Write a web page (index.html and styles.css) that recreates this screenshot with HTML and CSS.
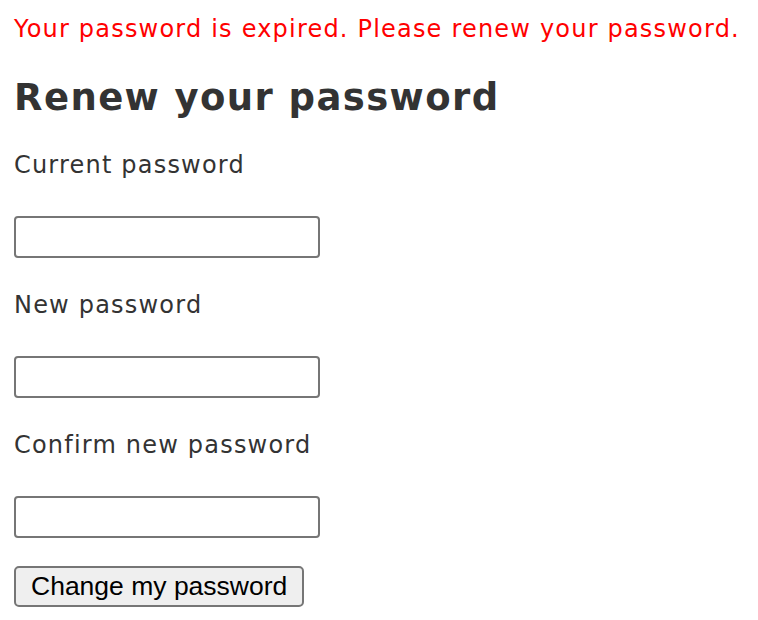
FILE: index.html
```html
<!DOCTYPE html>
<html lang="en">
<head>
  <meta charset="UTF-8">
  <title>Renew your password</title>
  <link rel="stylesheet" href="styles.css">
</head>
<body>

  <p class="error">Your password is expired. Please renew your password.</p>

  <h1>Renew your password</h1>

  <form class="renew-form">
    <label for="current">Current password</label>
    <input type="password" id="current">

    <label for="new">New password</label>
    <input type="password" id="new">

    <label for="confirm">Confirm new password</label>
    <input type="password" id="confirm">

    <button type="submit">Change my password</button>
  </form>

</body>
</html>
```

FILE: styles.css
```css
body {
  font-family: "DejaVu Sans", Verdana, sans-serif;
  font-size: 24px;
  letter-spacing: 1.2px;
  color: #333;
  margin: 0;
  padding: 15px 14px;
  background: #fff;
}
.error {
  color: #ff0000;
  margin: 0 0 33px 0;
}
h1 {
  font-size: 37px;
  letter-spacing: 1.4px;
  font-weight: bold;
  margin: 0 0 32px 0;
}
.renew-form {
  display: flex;
  flex-direction: column;
  align-items: flex-start;
}
label {
  margin-bottom: 37px;
}
input {
  width: 306px;
  height: 42px;
  box-sizing: border-box;
  border: 2px solid #767676;
  border-radius: 4px;
  margin: 0 0 33px 0;
}
button {
  font-family: "Liberation Sans", Arial, sans-serif;
  font-size: 26.5px;
  letter-spacing: 0;
  color: #000;
  background: #efefef;
  border: 2px solid #767676;
  border-radius: 5px;
  height: 41px;
  padding: 0 15px;
  margin-top: -5px;
}
```
